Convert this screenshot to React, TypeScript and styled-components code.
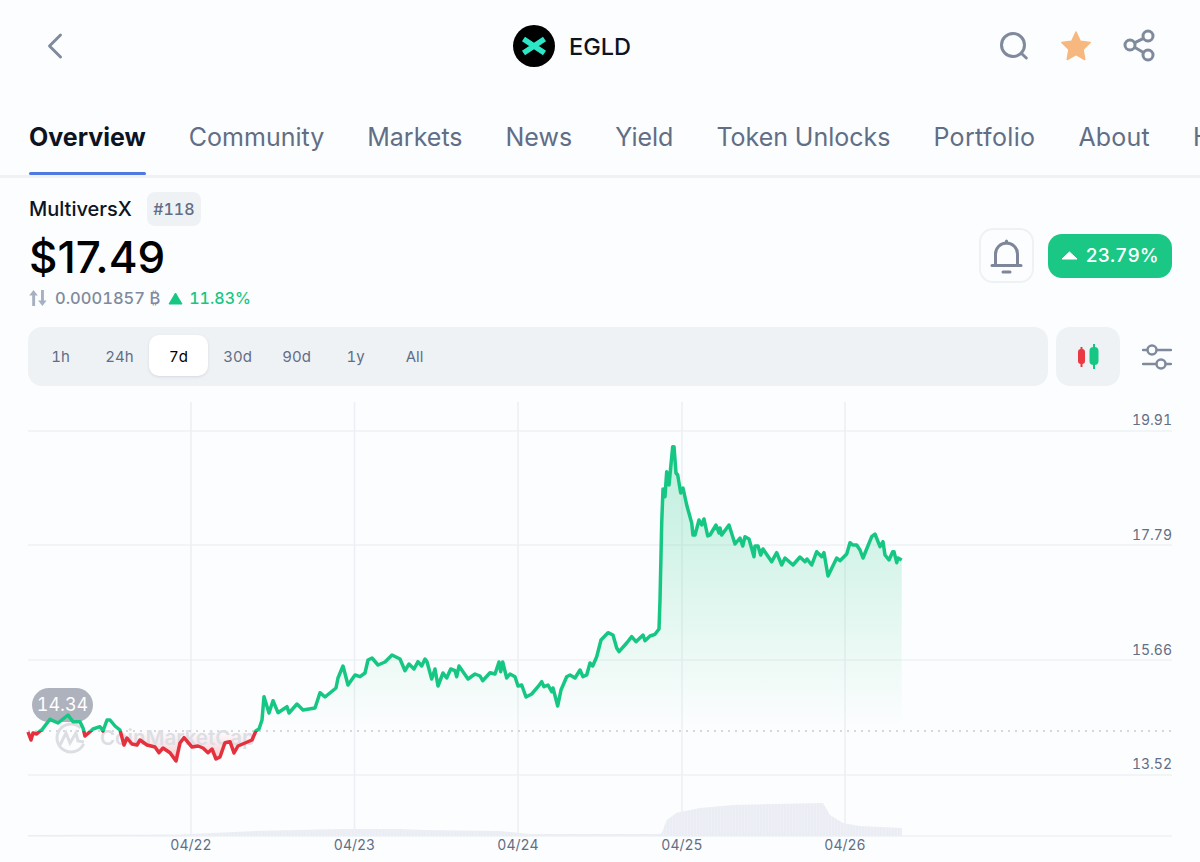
import React from 'react';
import styled, { createGlobalStyle } from 'styled-components';
import { ChevronLeft } from 'lucide-react';

const GlobalStyle = createGlobalStyle`
  html, body {
    margin: 0;
    padding: 0;
    background: #fcfdfe;
    font-family: Inter, "Liberation Sans", sans-serif;
    font-variant-numeric: tabular-nums;
    overflow: hidden;
  }
`;

const Page = styled.div`
  width: 1200px;
  height: 862px;
  overflow: hidden;
  background: #fcfdfe;
`;

const Header = styled.header`
  display: grid;
  grid-template-columns: 513px auto 1fr;
  align-items: center;
  height: 92px;
`;

const BackButton = styled.div`
  display: flex;
  padding-left: 33px;
  color: #808a9d;
`;

const Brand = styled.div`
  display: flex;
  align-items: center;
  gap: 14px;
`;

const BrandName = styled.span`
  font-size: 23.5px;
  font-weight: 500;
  color: #0d1421;
`;

const HeaderActions = styled.div`
  display: flex;
  align-items: center;
  justify-content: flex-end;
  gap: 31px;
  padding-right: 42px;
`;

const TabBar = styled.nav`
  display: flex;
  gap: 43px;
  height: 86px;
  padding-left: 29px;
  box-sizing: border-box;
  border-bottom: 3px solid #eff2f5;
  white-space: nowrap;
  overflow: hidden;
`;

const Tab = styled.div<{ $active?: boolean; $tracking?: number }>`
  position: relative;
  flex: none;
  padding-top: 29px;
  font-size: 25px;
  line-height: 32px;
  letter-spacing: ${(p) => p.$tracking ?? 0}px;
  font-weight: ${(p) => (p.$active ? 700 : 400)};
  color: ${(p) => (p.$active ? '#0d1421' : '#616e85')};
  ${(p) =>
    p.$active &&
    `&::after {
      content: '';
      position: absolute;
      left: 0;
      right: 0;
      bottom: 0;
      height: 3px;
      border-radius: 2px;
      background: #4f78e0;
    }`}
`;

const Summary = styled.section`
  display: flex;
  justify-content: space-between;
  padding: 14px 28px 0 29px;
`;

const NameRow = styled.div`
  display: flex;
  align-items: center;
  gap: 15px;
  height: 34px;
`;

const CoinName = styled.span`
  font-size: 20px;
  font-weight: 500;
  color: #0d1421;
`;

const RankBadge = styled.span`
  display: flex;
  align-items: center;
  justify-content: center;
  width: 54px;
  height: 34px;
  border-radius: 8px;
  background: #eff2f5;
  font-size: 16px;
  font-weight: 500;
  color: #616e85;
`;

const Price = styled.div`
  margin-top: 6px;
  font-size: 44px;
  line-height: 50px;
  font-weight: 500;
  font-variant-numeric: normal;
  color: #000;
`;

const SubRow = styled.div`
  display: flex;
  align-items: center;
  height: 24px;
  margin-top: 4px;
  font-size: 16.5px;
  font-weight: 500;
  color: #808a9d;
`;

const BtcValue = styled.span`
  margin: 0 8px 0 8px;
`;

const SubChange = styled.span`
  margin-left: 6px;
  font-size: 16px;
  color: #16c784;
`;

const SummaryActions = styled.div`
  display: flex;
  align-items: center;
  gap: 14px;
  margin-top: 36px;
  align-self: flex-start;
`;

const BellButton = styled.div`
  display: flex;
  align-items: center;
  justify-content: center;
  width: 55px;
  height: 55px;
  box-sizing: border-box;
  border: 2px solid #eff2f5;
  border-radius: 14px;
`;

const ChangePill = styled.div`
  display: flex;
  align-items: center;
  justify-content: center;
  gap: 7px;
  width: 124px;
  height: 44px;
  border-radius: 14px;
  background: #1bc785;
  font-size: 19px;
  font-weight: 500;
  color: #fff;
`;

const Toolbar = styled.div`
  display: flex;
  align-items: center;
  margin-top: 17px;
  padding: 0 28px;
`;

const RangeBar = styled.div`
  display: flex;
  flex: 1;
  height: 59px;
  box-sizing: border-box;
  padding: 8px 3px 10px;
  border-radius: 14px;
  background: #eff2f5;
`;

const RangeButton = styled.div<{ $active?: boolean }>`
  display: flex;
  align-items: center;
  justify-content: center;
  width: 59px;
  padding-top: 1px;
  box-sizing: border-box;
  border-radius: 10px;
  font-size: 15px;
  color: ${(p) => (p.$active ? '#000' : '#616e85')};
  background: ${(p) => (p.$active ? '#fff' : 'transparent')};
  box-shadow: ${(p) => (p.$active ? '0 1px 3px rgba(88, 102, 126, 0.18)' : 'none')};
`;

const CandleButton = styled.div`
  display: flex;
  align-items: center;
  justify-content: center;
  width: 64px;
  height: 59px;
  margin-left: 8px;
  border-radius: 14px;
  background: #eff2f5;
`;

const SettingsButton = styled.div`
  display: flex;
  margin-left: 22px;
`;

const ChartSvg = styled.svg`
  display: block;
  margin-top: 8px;
`;

const AxisLabel = styled.text`
  font-family: Inter, "Liberation Sans", sans-serif;
  font-variant-numeric: tabular-nums;
  font-size: 14px;
  fill: #616e85;
`;

const Watermark = styled.text`
  font-family: Inter, "Liberation Sans", sans-serif;
  font-size: 20.5px;
  font-weight: 600;
  fill: #dcdee4;
`;

const TagLabel = styled.text`
  font-family: Inter, "Liberation Sans", sans-serif;
  font-variant-numeric: tabular-nums;
  font-size: 18px;
  fill: #fff;
`;

const TABS = [
  { label: 'Overview' },
  { label: 'Community' },
  { label: 'Markets' },
  { label: 'News' },
  { label: 'Yield' },
  { label: 'Token Unlocks' },
  { label: 'Portfolio', tracking: 0.35 },
  { label: 'About', tracking: 0.2 },
  { label: 'Historical' },
];
const RANGES = ['1h', '24h', '7d', '30d', '90d', '1y', 'All'];
const GRID_Y = [431, 545, 660, 775];
const GRID_X = [191, 354.5, 518, 682, 845];
const PRICE_LABELS = [
  { y: 425, text: '19.91' },
  { y: 540, text: '17.79' },
  { y: 655, text: '15.66' },
  { y: 769, text: '13.52' },
];
const DATE_LABELS = [
  { x: 191, text: '04/22' },
  { x: 354.5, text: '04/23' },
  { x: 518, text: '04/24' },
  { x: 682, text: '04/25' },
  { x: 845, text: '04/26' },
];
const BASE_Y = 731;

const PRICE: [number, number][] = [
  [28, 732], [31, 740], [33, 733], [36.7, 734], [40, 731], [41.7, 730], [50, 719.3], [58, 723], [68, 715],
  [73, 721.7], [80, 721.7], [83, 728], [85, 736], [90, 731.7], [93, 729], [100, 726.7], [103, 731], [107, 720],
  [110, 720], [115, 726], [120, 730], [124, 745], [127, 738], [132, 744], [137, 745], [140, 740], [147, 745],
  [155, 747], [159, 752.7], [163, 748], [170, 752.7], [176, 761], [180, 743], [184, 737.7], [192, 747], [198, 746],
  [203, 748], [208, 752.7], [212, 749], [216, 759], [220, 757], [225, 742.7], [230, 741.7], [234, 753], [238, 746],
  [245, 743], [252, 740], [256, 730.7], [259, 729], [262, 720], [264, 696.7], [269, 713], [273, 700.7], [278, 712.7],
  [287, 706.7], [289, 713], [297, 704], [303, 710], [315, 708], [320, 692.7], [325, 697], [336, 688], [338, 678],
  [343, 666], [348, 685], [355, 675], [360, 676.7], [365, 673], [368, 660], [372, 658], [378, 665], [385, 662],
  [392, 655], [400, 659], [405, 670.7], [409, 664], [414, 669], [418, 661.7], [421.7, 666], [425, 659], [427, 661.7],
  [431.7, 679], [435, 669], [438, 686], [443, 673], [446.7, 678], [450.7, 669], [455, 670.7], [456.7, 676.7], [459, 666],
  [468, 679], [475, 674], [480, 676], [482.7, 680.7], [490, 672.7], [495, 674], [499, 662], [500.7, 671.7], [502.7, 662],
  [506.7, 678], [510, 674], [515, 676.7], [518, 686], [521.7, 685], [526, 697], [531.7, 694], [538, 686.7], [541.7, 681.7],
  [544, 686.7], [548, 685], [551.7, 691.7], [553, 688], [557.7, 706], [561, 690], [566.7, 676.7], [570, 675], [575, 678],
  [580, 670], [583, 676.7], [586.7, 675], [590, 663], [592.7, 666], [596.7, 656.7], [601, 640], [608, 632.7], [613, 635],
  [616.7, 648], [619, 651.7], [626.7, 643], [631.7, 636.7], [636, 641.7], [643, 635], [645, 640.7], [650, 636], [655, 634.3],
  [659, 629], [660, 600], [661.7, 523], [663, 489], [665, 496.7], [666.7, 471.7], [669, 485], [672.7, 446.7], [674, 446.7],
  [676, 473], [677.7, 475], [680.7, 493], [683, 488], [686.7, 505], [691.7, 523], [693, 535], [695, 535], [699, 520],
  [701.7, 525], [704, 519], [707.7, 536], [710, 535], [716, 525], [719, 533], [720, 528], [721.7, 535], [729, 525], [735, 544],
  [740, 538], [742.7, 546], [745, 536.7], [749, 539], [754, 556.7], [755, 546], [758, 546], [760.7, 555], [763, 549],
  [771.7, 561.7], [776.7, 552.7], [781.7, 565], [785, 558], [793, 565], [800, 557], [805, 561.7], [807, 559], [811.7, 565],
  [816.7, 551.7], [821.7, 556.7], [824, 552.7], [828, 576], [836.7, 558], [840, 560.7], [846.7, 554], [850, 542.7],
  [852.7, 545], [856.7, 545], [860, 550], [863, 558], [871.7, 536.7], [875, 534], [880, 546.7], [883, 541.7], [885, 555],
  [889, 560], [892.7, 551.7], [894, 551.7], [896.7, 562.7], [898, 558], [901.7, 560],
];

const VOLUME: [number, number][] = [
  [28, 835], [180, 834.5], [263, 830.7], [340, 829], [400, 829], [425, 830], [500, 831], [530, 834], [660, 834], [661.7, 833],
  [666.7, 820], [676.7, 812.7], [700, 808], [733, 805], [823, 803], [830, 815], [843, 823], [860, 826], [902, 828],
];

const toPath = (points: [number, number][]) => points.map(([x, y], i) => `${i ? 'L' : 'M'}${x} ${y}`).join(' ');

const linePath = toPath(PRICE);
const areaPath = `${linePath} L901.7 ${BASE_Y} L28 ${BASE_Y} Z`;
const volumePath = `${toPath(VOLUME)} L902 836 L28 836 Z`;

const SearchIcon = () => (
  <svg width="30" height="32" viewBox="0 0 30 32" fill="none" stroke="#808a9d" strokeWidth="3" strokeLinecap="round">
    <circle cx="14" cy="15" r="11.5" />
    <path d="M22.500 23.500l4.800 4.500" />
  </svg>
);

const StarIcon = () => (
  <svg width="32" height="32" viewBox="0 0 32 32">
    <path
      d="M16 2l4.300 9.200 9.900 1.300-7.200 7 1.800 10-8.800-4.800-8.800 4.800 1.800-10-7.200-7 9.900-1.300z"
      fill="#f6b87e"
      stroke="#f6b87e"
      strokeWidth="1.500"
      strokeLinejoin="round"
    />
  </svg>
);

const ShareIcon = () => (
  <svg width="35" height="34" viewBox="0 0 35 34" fill="none" stroke="#808a9d" strokeWidth="3">
    <circle cx="25" cy="7" r="5" />
    <circle cx="7" cy="16" r="5" />
    <circle cx="25" cy="26" r="5" />
    <path d="M11.500 13.800l9-4.500M11.500 18.300l9 5.200" />
  </svg>
);

const CoinLogo = () => (
  <svg width="42" height="42" viewBox="0 0 42 42">
    <circle cx="21" cy="21" r="21" fill="#000" />
    <path d="M10.500 14l21 14M31.500 14l-21 14" stroke="#2ce6c8" strokeWidth="5.500" fill="none" />
  </svg>
);

const SwapIcon = () => (
  <svg width="18" height="18" viewBox="0 0 18 18" fill="#a6b0c3">
    <path d="M4 1l4.300 5.500H5.600V17H2.700V6.500H-.300z" transform="translate(.5 0)" />
    <path d="M12 1h2.900v10.500h2.700L13.400 17l-4.300-5.500H12z" />
  </svg>
);

const SmallTriangle = () => (
  <svg width="15" height="13" viewBox="0 0 15 13">
    <path d="M7.500 1l6.500 11H1z" fill="#16c784" stroke="#16c784" strokeWidth="1" strokeLinejoin="round" />
  </svg>
);

const PillTriangle = () => (
  <svg width="17" height="9" viewBox="0 0 17 9">
    <path d="M8.500 1l7.500 7H1z" fill="#fff" stroke="#fff" strokeWidth="1" strokeLinejoin="round" />
  </svg>
);

const BellIcon = () => (
  <svg width="35" height="36" viewBox="0 0 35 36" fill="none" stroke="#7d8799" strokeWidth="3" strokeLinecap="round">
    <path d="M6.500 27V16a11 11 0 0 1 22 0v11" />
    <path d="M3 27.500h29" />
    <path d="M14 34h7" />
    <path d="M17.500 3v2" />
  </svg>
);

const CandleIcon = () => (
  <svg width="26" height="28" viewBox="0 0 26 28">
    <path d="M6.500 4v20" stroke="#ea3943" strokeWidth="2" />
    <rect x="3" y="6" width="7" height="15" rx="3" fill="#ea3943" />
    <path d="M19 1v25" stroke="#16c784" strokeWidth="2" />
    <rect x="14.500" y="4" width="9" height="18" rx="4" fill="#16c784" />
  </svg>
);

const SlidersIcon = () => (
  <svg width="30" height="28" viewBox="0 0 30 28" fill="none" stroke="#808a9d" strokeWidth="2.500" strokeLinecap="round">
    <circle cx="10" cy="7" r="4.500" />
    <path d="M1 7h4M15 7h14" />
    <circle cx="19" cy="21" r="4.500" />
    <path d="M1 21h13M24 21h5" />
  </svg>
);

const PriceChart = () => (
  <ChartSvg width="1200" height="468" viewBox="0 394 1200 468">
    <defs>
      <linearGradient id="greenFill" gradientUnits="userSpaceOnUse" x1="0" y1="447" x2="0" y2="728">
        <stop offset="0" stopColor="#16c784" stopOpacity="0.27" />
        <stop offset="1" stopColor="#16c784" stopOpacity="0" />
      </linearGradient>
      <linearGradient id="redFill" gradientUnits="userSpaceOnUse" x1="0" y1="731" x2="0" y2="765">
        <stop offset="0" stopColor="#ea3943" stopOpacity="0" />
        <stop offset="1" stopColor="#ea3943" stopOpacity="0.3" />
      </linearGradient>
      <pattern id="volumeBars" width="3" height="10" patternUnits="userSpaceOnUse">
        <rect width="3" height="10" fill="#ebedf4" />
        <rect width="1" height="10" fill="#eef0f6" />
      </pattern>
      <clipPath id="aboveBase">
        <rect x="0" y="394" width="1200" height={BASE_Y - 394} />
      </clipPath>
      <clipPath id="belowBase">
        <rect x="0" y={BASE_Y} width="1200" height="131" />
      </clipPath>
    </defs>

    {GRID_Y.map((y) => (
      <path key={y} d={`M28 ${y}H1172`} stroke="#eff2f5" strokeWidth="1.500" />
    ))}
    <path d="M28 836H1172" stroke="#eff2f5" strokeWidth="1.500" />
    {GRID_X.map((x) => (
      <path key={x} d={`M${x} 402V836`} stroke="#eceff3" strokeWidth="1.500" />
    ))}

    <path d={volumePath} fill="url(#volumeBars)" />

    <path d={`M28 ${BASE_Y}H1172`} stroke="#c9ccd4" strokeWidth="1.500" strokeDasharray="2 5" />

    <path d={areaPath} fill="url(#greenFill)" clipPath="url(#aboveBase)" />
    <path d={areaPath} fill="url(#redFill)" clipPath="url(#belowBase)" />

    <circle cx="71" cy="738" r="14" fill="none" stroke="#dcdee4" strokeWidth="3" strokeDasharray="70 18" transform="rotate(25 71 738)" />
    <path d="M60 745l6-12 4 10 6-10 2 8 6 1" fill="none" stroke="#dcdee4" strokeWidth="3" />
    <Watermark x="100" y="745">CoinMarketCap</Watermark>

    <rect x="32" y="688" width="61" height="34" rx="17" fill="#aeb2bd" />
    <TagLabel x="62.500" y="711" textAnchor="middle">14.34</TagLabel>

    <path d={linePath} fill="none" stroke="#16c784" strokeWidth="3.500" strokeLinejoin="round" clipPath="url(#aboveBase)" />
    <path d={linePath} fill="none" stroke="#e5303e" strokeWidth="3.500" strokeLinejoin="round" clipPath="url(#belowBase)" />

    {PRICE_LABELS.map((label) => (
      <AxisLabel key={label.text} x="1172" y={label.y} textAnchor="end">{label.text}</AxisLabel>
    ))}
    {DATE_LABELS.map((label) => (
      <AxisLabel key={label.text} x={label.x} y="850" textAnchor="middle">{label.text}</AxisLabel>
    ))}
  </ChartSvg>
);

export default function App() {
  return (
    <Page>
      <GlobalStyle />
      <Header>
        <BackButton>
          <ChevronLeft size={44} strokeWidth={1.6} />
        </BackButton>
        <Brand>
          <CoinLogo />
          <BrandName>EGLD</BrandName>
        </Brand>
        <HeaderActions>
          <SearchIcon />
          <StarIcon />
          <ShareIcon />
        </HeaderActions>
      </Header>

      <TabBar>
        {TABS.map((tab, i) => (
          <Tab key={tab.label} $active={i === 0} $tracking={tab.tracking}>{tab.label}</Tab>
        ))}
      </TabBar>

      <Summary>
        <div>
          <NameRow>
            <CoinName>MultiversX</CoinName>
            <RankBadge>#118</RankBadge>
          </NameRow>
          <Price>$17.49</Price>
          <SubRow>
            <SwapIcon />
            <BtcValue>0.0001857 ₿</BtcValue>
            <SmallTriangle />
            <SubChange>11.83%</SubChange>
          </SubRow>
        </div>
        <SummaryActions>
          <BellButton>
            <BellIcon />
          </BellButton>
          <ChangePill>
            <PillTriangle />
            23.79%
          </ChangePill>
        </SummaryActions>
      </Summary>

      <Toolbar>
        <RangeBar>
          {RANGES.map((range) => (
            <RangeButton key={range} $active={range === '7d'}>{range}</RangeButton>
          ))}
        </RangeBar>
        <CandleButton>
          <CandleIcon />
        </CandleButton>
        <SettingsButton>
          <SlidersIcon />
        </SettingsButton>
      </Toolbar>

      <PriceChart />
    </Page>
  );
}
